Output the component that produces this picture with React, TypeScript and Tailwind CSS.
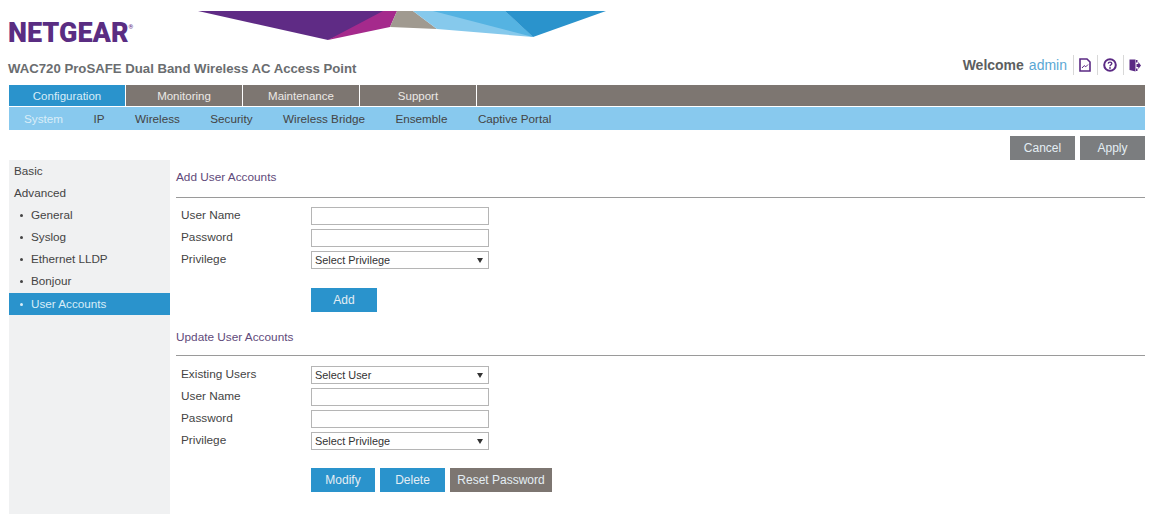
export default function App() {
  const tabs = ["Configuration", "Monitoring", "Maintenance", "Support"];
  const subs = ["System", "IP", "Wireless", "Security", "Wireless Bridge", "Ensemble", "Captive Portal"];
  const side = ["General", "Syslog", "Ethernet LLDP", "Bonjour", "User Accounts"];
  const Label = ({ children }: { children: string }) => (
    <div className="w-[135px] pl-[5px] text-[11.8px] text-[#444]">{children}</div>
  );
  const Input = () => <div className="w-[178px] h-[18px] border border-[#b5b5b5] bg-white" />;
  const Select = ({ text }: { text: string }) => (
    <div className="w-[178px] h-[18px] border border-[#b5b5b5] bg-white flex items-center justify-between pl-[3px] pr-[5px] text-[10.9px] text-[#333]">
      <span>{text}</span>
      <svg width="6" height="5" viewBox="0 0 6 5"><path d="M0 0H6L3 5Z" fill="#333" /></svg>
    </div>
  );
  const Row = ({ label, children }: { label: string; children: React.ReactNode }) => (
    <div className="flex items-center h-[18px] mb-[4px]">
      <Label>{label}</Label>
      {children}
    </div>
  );
  const Btn = ({ text, w, color }: { text: string; w: string; color: string }) => (
    <div className={`${w} ${color} h-[24px] flex items-center justify-center text-[12px] text-[#e4eef4]`}>{text}</div>
  );
  return (
    <div className="h-[514px] w-[1153px] overflow-hidden bg-white font-['Liberation_Sans',Arial,sans-serif]">
      <div className="flex h-[85px] pl-[8px] pr-[8px]">
        <div className="w-[190px] shrink-0">
          <div className="mt-[19px] h-[28px] flex items-start font-['Roboto',sans-serif] text-[27px] leading-[28px] font-black text-[#5a2d82]">
            NETGEAR<span className="text-[6px] leading-[10px] mt-[3px]">®</span>
          </div>
          <div className="mt-[14px] whitespace-nowrap text-[13.2px] font-bold leading-[16px] text-[#6a6d70]">
            WAC720 ProSAFE Dual Band Wireless AC Access Point
          </div>
        </div>
        <svg className="mt-[11px] shrink-0" width="408" height="31" viewBox="198 11 408 31">
          <polygon points="198,11 397,11 328,40" fill="#5f2b85" />
          <polygon points="397,11 390,27 328,40 383,11" fill="#a52a8c" />
          <polygon points="397,11 413,11 437,29 390,27" fill="#a09a90" />
          <polygon points="413,11 505,11 533,37 437,29" fill="#86c9ec" />
          <polygon points="433,11 505,11 533,37" fill="#55b3e2" />
          <polygon points="505,11 606,11 533,37" fill="#2a93cc" />
        </svg>
        <div className="ml-auto mt-[55px] h-[20px] flex items-center text-[#5c5e60]">
          <span className="text-[14px] font-bold">Welcome</span>
          <span className="ml-[5px] text-[14px] text-[#5aa7d4]">admin</span>
          <div className="ml-[6px] h-[20px] border-l border-[#d8d8d8] pl-[5px] pr-[6px] flex items-center">
            <svg width="12" height="14" viewBox="0 0 12 14" fill="none" stroke="#5b2a84" strokeWidth="1.6">
              <path d="M1 1H8L11 4V13H1Z" />
              <path d="M3 10L5.2 7.6L6.8 8.8L9 6.5" strokeWidth="1" />
            </svg>
          </div>
          <div className="h-[20px] border-l border-[#d8d8d8] pl-[5px] pr-[6px] flex items-center">
            <svg width="14" height="14" viewBox="0 0 14 14" fill="none">
              <circle cx="7" cy="7" r="5.8" stroke="#5b2a84" strokeWidth="2" />
              <path d="M5.2 5.6C5.3 3.6 8.8 3.6 8.8 5.6C8.8 6.8 7 6.7 7 8.2" stroke="#5b2a84" strokeWidth="1.4" />
              <circle cx="7" cy="10" r="0.9" fill="#5b2a84" />
            </svg>
          </div>
          <div className="h-[20px] border-l border-[#d8d8d8] pl-[5px] pr-[4px] flex items-center">
            <svg width="12" height="13" viewBox="0 0 12 13">
              <path d="M0.5 0.5H6.5V12.5L0.5 11Z" fill="#5b2a84" />
              <path d="M7 1H8.5V3.5H7ZM7 9.5H8.5V12H7Z" fill="#5b2a84" />
              <path d="M7.5 5H9.3V3L12 6.5L9.3 10V8H7.5Z" fill="#5b2a84" />
            </svg>
          </div>
        </div>
      </div>

      <div className="ml-[9px] mr-[8px]">
        <div className="flex h-[22px] bg-[#7d7671] border-b border-white">
          {tabs.map((t, i) => (
            <div
              key={t}
              className={`${i === 0 ? "bg-[#2a93cc] text-[#d8edf8]" : "text-[#ece9e6]"} w-[117px] flex items-center justify-center border-r border-white pt-[2px] text-[11.5px]`}
            >
              {t}
            </div>
          ))}
        </div>
        <div className="flex items-center gap-[30.5px] h-[23px] bg-[#88c9ee] pl-[15px] text-[11.7px] text-[#444]">
          {subs.map((s, i) => (
            <div key={s} className={i === 0 ? "text-[#d8edf8]" : ""}>{s}</div>
          ))}
        </div>
      </div>

      <div className="flex justify-end gap-[5px] mr-[8px] mt-[6px]">
        <Btn text="Cancel" w="w-[65px]" color="bg-[#7b7d7f]" />
        <Btn text="Apply" w="w-[65px]" color="bg-[#7b7d7f]" />
      </div>

      <div className="flex ml-[9px] mr-[8px]">
        <div className="w-[161px] h-[354px] shrink-0 bg-[#f0f1f2] text-[11.7px] text-[#444]">
          <div className="h-[22px] flex items-center pl-[5px]">Basic</div>
          <div className="h-[22px] flex items-center pl-[5px]">Advanced</div>
          {side.map((s, i) => (
            <div
              key={s}
              className={`h-[22px] flex items-center pl-[11px] ${i === 4 ? "bg-[#2a93cc] text-[#d8edf8] mt-[1px]" : ""}`}
            >
              <span className="mr-[8px] w-[3px] h-[3px] rounded-full bg-current" />
              {s}
            </div>
          ))}
        </div>
        <div className="flex-1 ml-[6px]">
          <div className="h-[38px] border-b border-[#9a9a9a] pt-[10px] text-[11.8px] leading-[14px] text-[#5f4a7a]">Add User Accounts</div>
          <div className="mt-[9px]">
            <Row label="User Name"><Input /></Row>
            <Row label="Password"><Input /></Row>
            <Row label="Privilege"><Select text="Select Privilege" /></Row>
          </div>
          <div className="ml-[135px] mt-[19px] flex">
            <Btn text="Add" w="w-[66px]" color="bg-[#2a93cc]" />
          </div>
          <div className="mt-[18px] h-[26px] border-b border-[#9a9a9a] text-[11.8px] leading-[14px] text-[#5f4a7a]">Update User Accounts</div>
          <div className="mt-[10px]">
            <Row label="Existing Users"><Select text="Select User" /></Row>
            <Row label="User Name"><Input /></Row>
            <Row label="Password"><Input /></Row>
            <Row label="Privilege"><Select text="Select Privilege" /></Row>
          </div>
          <div className="ml-[135px] mt-[18px] flex gap-[5px]">
            <Btn text="Modify" w="w-[64px]" color="bg-[#2a93cc]" />
            <Btn text="Delete" w="w-[65px]" color="bg-[#2a93cc]" />
            <Btn text="Reset Password" w="w-[102px]" color="bg-[#7d7671]" />
          </div>
        </div>
      </div>
    </div>
  );
}
